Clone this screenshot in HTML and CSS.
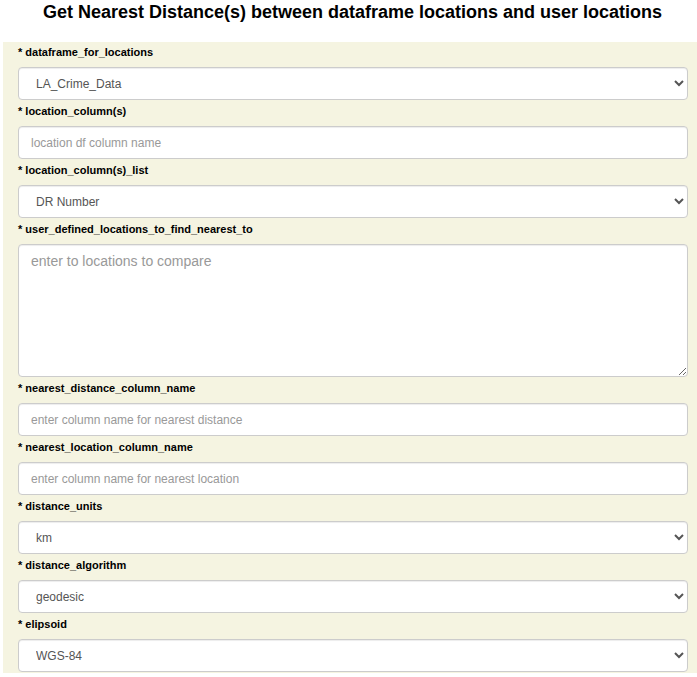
FILE: index.html
```html
<!DOCTYPE html>
<html>
<head>
<meta charset="utf-8">
<link rel="stylesheet" href="styles.css">
</head>
<body>
<h1 class="title">Get Nearest Distance(s) between dataframe locations and user locations</h1>
<form class="panel">
  <div class="field">
    <label class="lbl">* dataframe_for_locations</label>
    <select class="ctl sel"><option>LA_Crime_Data</option></select>
  </div>
  <div class="field">
    <label class="lbl">* location_column(s)</label>
    <input class="ctl" type="text" placeholder="location df column name">
  </div>
  <div class="field">
    <label class="lbl">* location_column(s)_list</label>
    <select class="ctl sel"><option>DR Number</option></select>
  </div>
  <div class="field">
    <label class="lbl">* user_defined_locations_to_find_nearest_to</label>
    <textarea class="ctl area" placeholder="enter to locations to compare"></textarea>
  </div>
  <div class="field">
    <label class="lbl">* nearest_distance_column_name</label>
    <input class="ctl" type="text" placeholder="enter column name for nearest distance">
  </div>
  <div class="field">
    <label class="lbl">* nearest_location_column_name</label>
    <input class="ctl" type="text" placeholder="enter column name for nearest location">
  </div>
  <div class="field">
    <label class="lbl">* distance_units</label>
    <select class="ctl sel"><option>km</option></select>
  </div>
  <div class="field">
    <label class="lbl">* distance_algorithm</label>
    <select class="ctl sel"><option>geodesic</option></select>
  </div>
  <div class="field">
    <label class="lbl">* elipsoid</label>
    <select class="ctl sel"><option>WGS-84</option></select>
  </div>
</form>
</body>
</html>
```

FILE: styles.css
```css
html, body {
  margin: 0;
  padding: 0;
  background: #fff;
  font-family: "Liberation Sans", Arial, sans-serif;
  color: #000;
  overflow: hidden;
}
.title {
  margin: 0;
  height: 42px;
  padding-top: 2px;
  box-sizing: border-box;
  font-size: 18px;
  line-height: 20px;
  font-weight: bold;
  text-align: center;
  padding-left: 8px;
}
.panel {
  margin: 0 0 0 3px;
  background: #f5f4e1;
  padding: 0 9px 1px 15px;
}
.field {
  display: flex;
  flex-direction: column;
}
.lbl {
  display: block;
  padding-top: 3px;
  font-size: 11px;
  line-height: 14px;
  font-weight: bold;
  margin-bottom: 8px;
}
.field:not(:first-child) .lbl {
  padding-top: 4px;
}
.ctl {
  display: block;
  box-sizing: border-box;
  width: 100%;
  height: 33px;
  margin: 0;
  padding: 6px 12px;
  font-family: "Liberation Sans", Arial, sans-serif;
  font-size: 12px;
  color: #555;
  background: #fff;
  border: 1px solid #ccc;
  border-radius: 4px;
  box-shadow: inset 0 1px 1px rgba(0,0,0,0.075);
  outline: none;
}
.ctl::placeholder {
  color: #999;
}
.sel {
  padding-left: 13px;
}
.sel option {
  text-indent: 0;
}
.area {
  height: 133px;
  padding: 6px 12px;
  font-size: 14px;
  line-height: 20px;
  resize: vertical;
}
```
